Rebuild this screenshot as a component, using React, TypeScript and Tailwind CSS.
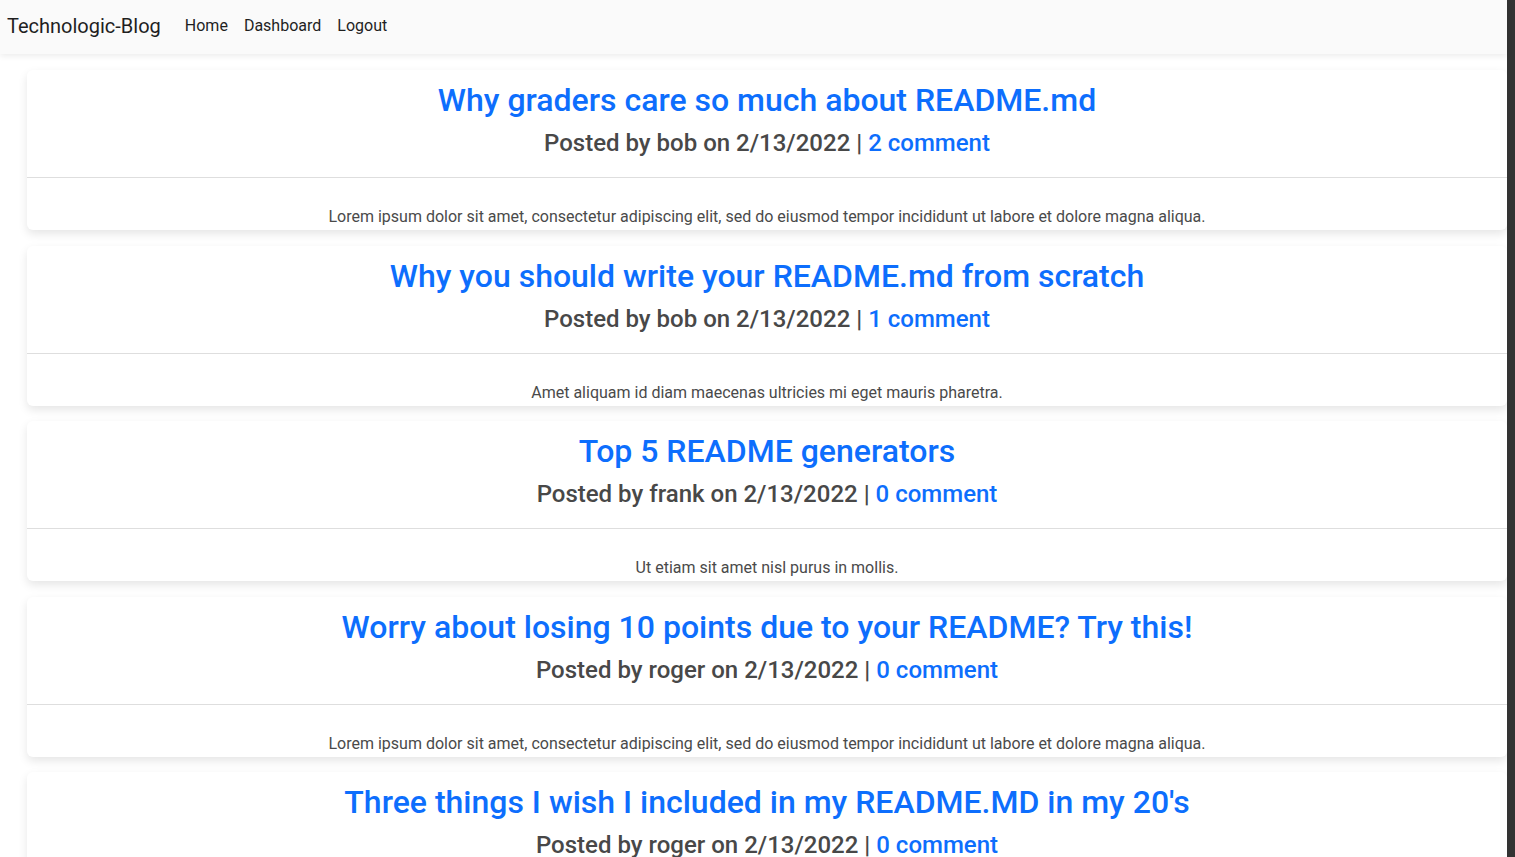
import React from "react";

const posts = [
  {
    title: "Why graders care so much about README.md",
    author: "bob",
    comments: 2,
    body: "Lorem ipsum dolor sit amet, consectetur adipiscing elit, sed do eiusmod tempor incididunt ut labore et dolore magna aliqua.",
  },
  {
    title: "Why you should write your README.md from scratch",
    author: "bob",
    comments: 1,
    body: "Amet aliquam id diam maecenas ultricies mi eget mauris pharetra.",
  },
  {
    title: "Top 5 README generators",
    author: "frank",
    comments: 0,
    body: "Ut etiam sit amet nisl purus in mollis.",
  },
  {
    title: "Worry about losing 10 points due to your README? Try this!",
    author: "roger",
    comments: 0,
    body: "Lorem ipsum dolor sit amet, consectetur adipiscing elit, sed do eiusmod tempor incididunt ut labore et dolore magna aliqua.",
  },
  {
    title: "Three things I wish I included in my README.MD in my 20's",
    author: "roger",
    comments: 0,
    body: "Amet aliquam id diam maecenas ultricies mi eget mauris pharetra.",
  },
];

function Card({ p }: { p: (typeof posts)[number] }) {
  return (
    <div className="ml-[27px] bg-white rounded-[6px] shadow-[0_4px_10px_rgba(0,0,0,0.10)] shrink-0">
      <div className="pt-[11px] pb-[12px] text-center border-b border-[#dedede]">
        <h2 className="text-[32px] leading-[38px] font-medium text-[#0d6efd] mb-[10px]">
          {p.title}
        </h2>
        <h3 className="text-[24px] leading-[29px] font-medium text-[#484848] mb-[7px]">
          Posted by {p.author} on 2/13/2022 |{" "}
          <span className="text-[#0d6efd]">{p.comments} comment</span>
        </h3>
      </div>
      <div className="pt-[27px] pb-[1px] text-center">
        <p className="text-[16px] leading-[24px] text-[#4a4a4a]">{p.body}</p>
      </div>
    </div>
  );
}

export default function App() {
  return (
    <div
      className="h-[857px] w-[1515px] overflow-hidden flex bg-white"
      style={{ fontFamily: "Roboto, 'Noto Sans', sans-serif" }}
    >
      <div className="w-[1507px] flex flex-col shrink-0">
        <nav className="h-[54px] bg-[#fafafa] shadow-[0_2px_6px_rgba(0,0,0,0.08)] flex items-center px-[7px] pb-[2px] shrink-0 relative z-10">
          <span className="text-[20px] text-[#1f1f1f] mr-[24px]">Technologic-Blog</span>
          <div className="flex items-center gap-[16px] text-[16px] text-[#1f1f1f]">
            <span>Home</span>
            <span>Dashboard</span>
            <span>Logout</span>
          </div>
        </nav>
        <div className="flex flex-col gap-[15.5px] pt-[16px]">
          {posts.map((p, i) => (
            <Card key={i} p={p} />
          ))}
        </div>
      </div>
      <div className="w-[8px] h-full bg-[#333333] shrink-0" />
    </div>
  );
}
